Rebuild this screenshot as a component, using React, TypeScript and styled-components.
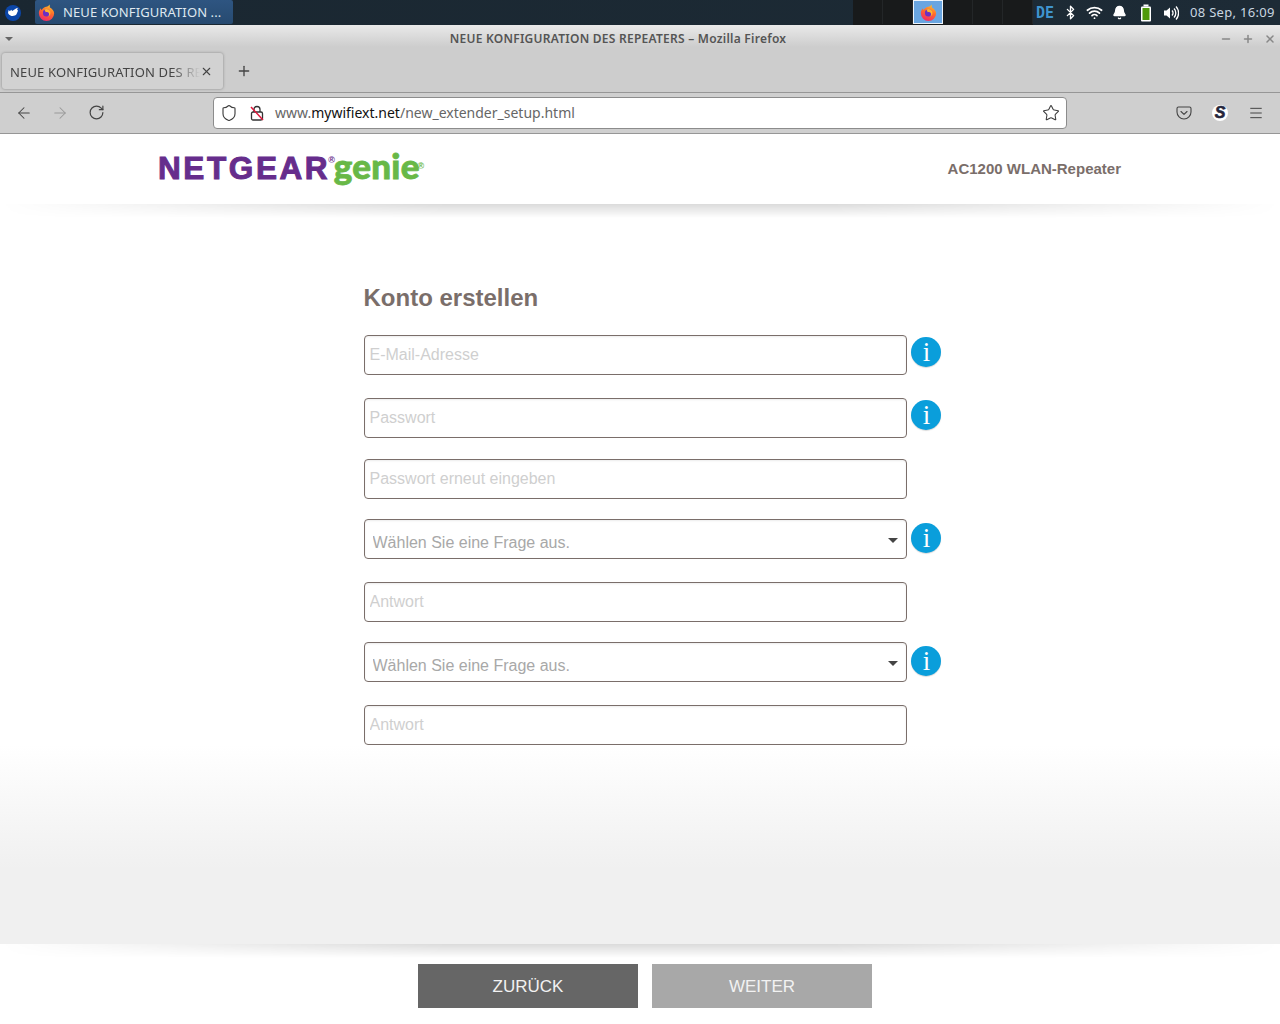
import React from "react";
import styled, { createGlobalStyle } from "styled-components";
import { ArrowLeft, ArrowRight, RotateCw, Star, Shield, Plus, X, Minus, Menu, Bluetooth, Wifi, Bell } from "lucide-react";

const GlobalStyle = createGlobalStyle`
  html, body {
    margin: 0;
    padding: 0;
    background: #fff;
  }
  * {
    box-sizing: border-box;
  }
`;

const Screen = styled.div`
  width: 1280px;
  height: 1024px;
  overflow: hidden;
  display: flex;
  flex-direction: column;
  font-family: "Noto Sans", sans-serif;
`;

const Taskbar = styled.div`
  height: 25px;
  flex: none;
  display: flex;
  align-items: stretch;
  background: linear-gradient(90deg, #1a2731, #1d2b36);
  color: #d7e3ec;
`;

const StartButton = styled.div`
  width: 35px;
  display: flex;
  align-items: center;
  padding-left: 5px;
`;

const WindowButton = styled.div`
  width: 198px;
  height: 24px;
  display: flex;
  align-items: center;
  gap: 8px;
  padding-left: 3px;
  border-radius: 2px;
  background: linear-gradient(180deg, #2e5581, #274a70);
  font-size: 13px;
  letter-spacing: 0.1px;
  color: #dfe8f0;
  white-space: nowrap;
`;

const TaskSpacer = styled.div`
  flex: 1;
`;

const Pager = styled.div`
  width: 180px;
  display: flex;
  background: #181a1b;
`;

const PagerCell = styled.div<{ $active?: boolean }>`
  width: 30px;
  height: 24px;
  display: flex;
  align-items: center;
  justify-content: center;
  border-right: 1px solid #232628;
  ${(p) => p.$active && "background: #69a5e0; border: 1px solid #eef4fa;"}
`;

const Tray = styled.div`
  width: 247px;
  display: flex;
  align-items: center;
  padding-left: 3px;
  color: #fff;
`;

const TrayLang = styled.span`
  width: 21px;
  font-family: "DejaVu Sans Mono", monospace;
  font-weight: bold;
  font-size: 15px;
  color: #3f94cf;
`;

const TraySlot = styled.span<{ $w: number }>`
  width: ${(p) => p.$w}px;
  display: flex;
  justify-content: center;
`;

const Clock = styled.span`
  margin-left: 7px;
  margin-top: -1px;
  font-size: 13px;
  letter-spacing: 0.3px;
  color: #c9d6e0;
  white-space: nowrap;
`;

const WindowFrame = styled.div`
  height: 68px;
  flex: none;
  background: linear-gradient(180deg, #e9e9e9 0, #cdcdcd 22px);
  border-bottom: 1px solid #969696;
  display: flex;
  flex-direction: column;
`;

const TitleRow = styled.div`
  height: 27px;
  display: flex;
  align-items: center;
  padding: 0 5px;
`;

const TitleArrow = styled.span`
  width: 0;
  height: 0;
  border-left: 4px solid transparent;
  border-right: 4px solid transparent;
  border-top: 4px solid #666;
`;

const TitleText = styled.div`
  flex: 1;
  padding-left: 3px;
  text-align: center;
  font-size: 12px;
  font-weight: 600;
  letter-spacing: 0.25px;
  color: #555;
`;

const TitleControls = styled.div`
  width: 56px;
  display: flex;
  justify-content: space-between;
  margin-right: -1px;
  color: #888;
`;

const TabRow = styled.div`
  display: flex;
  align-items: center;
  padding-left: 2px;
`;

const Tab = styled.div`
  width: 221px;
  height: 36px;
  margin-top: 1px;
  display: flex;
  align-items: center;
  padding-left: 8px;
  border-radius: 3px;
  background: #d2d2d2;
  box-shadow: 0 0 3px rgba(0, 0, 0, 0.35);
  color: #444;
`;

const TabLabel = styled.span`
  width: 190px;
  padding-top: 1px;
  overflow: hidden;
  white-space: nowrap;
  font-size: 13px;
  letter-spacing: 0.15px;
  mask-image: linear-gradient(90deg, #000 85%, transparent);
`;

const NewTab = styled.div`
  margin-left: 13px;
  display: flex;
  color: #444;
`;

const Toolbar = styled.div`
  height: 41px;
  flex: none;
  display: flex;
  align-items: center;
  background: #cfcfcf;
  border-bottom: 1px solid #969696;
`;

const NavButton = styled.div<{ $muted?: boolean }>`
  width: 36px;
  display: flex;
  justify-content: center;
  color: ${(p) => (p.$muted ? "#999" : "#444")};
`;

const NavGroup = styled.div`
  width: 213px;
  display: flex;
  padding-left: 6px;
`;

const UrlBar = styled.div`
  width: 854px;
  height: 32px;
  margin-top: -1px;
  display: flex;
  align-items: center;
  padding: 0 6px;
  background: #fff;
  border: 1px solid #8c8c8c;
  border-radius: 4px;
  color: #3c3c3c;
`;

const UrlIcon = styled.span`
  width: 30px;
  display: flex;
`;

const UrlText = styled.div`
  flex: 1;
  margin-left: 11px;
  font-size: 14px;
  color: #666;
`;

const UrlHost = styled.span`
  color: #111;
`;

const ToolIcons = styled.div`
  flex: 1;
  display: flex;
  justify-content: flex-end;
  align-items: center;
  gap: 20px;
  padding-right: 16px;
  color: #444;
`;

const Page = styled.div`
  flex: 1;
  display: flex;
  flex-direction: column;
  font-family: "Liberation Sans", Arial, sans-serif;
  background: #fff;
`;

const Header = styled.div`
  height: 70px;
  flex: none;
  display: flex;
  align-items: center;
  justify-content: space-between;
  padding: 0 159px 2px 158px;
`;

const Logo = styled.div`
  display: flex;
  align-items: baseline;
  margin-top: -6px;
  white-space: nowrap;
`;

const LogoBrand = styled.span`
  font-family: "Liberation Sans", sans-serif;
  font-weight: bold;
  font-size: 31.5px;
  letter-spacing: 2.6px;
  color: #662d8c;
  -webkit-text-stroke: 1px #662d8c;
`;

const LogoProduct = styled.span`
  margin-left: -1px;
  font-family: "Lato", sans-serif;
  font-weight: 900;
  font-size: 35px;
  letter-spacing: 0.2px;
  color: #68b847;
  -webkit-text-stroke: 0.8px #68b847;
`;

const LogoMark = styled.sup<{ $color: string; $top: number }>`
  font-family: "Liberation Sans", sans-serif;
  font-size: 9px;
  font-weight: bold;
  letter-spacing: 0;
  -webkit-text-stroke: 0;
  line-height: 0;
  position: relative;
  top: ${(p) => p.$top}px;
  margin-left: -2px;
  color: ${(p) => p.$color};
`;

const ModelName = styled.div`
  font-size: 15px;
  font-weight: bold;
  color: #7a6e6a;
`;

const Content = styled.div`
  flex: 1;
  position: relative;
  padding: 79px 0 0 364px;
  background: linear-gradient(180deg, #fff 0, #fff 541px, #f0f0f0 665px);

  &::before,
  &::after {
    content: "";
    position: absolute;
    left: 0;
    right: 0;
    height: 14px;
    background: linear-gradient(180deg, rgba(0, 0, 0, 0.14), transparent);
    mask-image: linear-gradient(90deg, transparent, #000 35%, #000 65%, transparent);
  }
  &::before {
    top: 0;
  }
  &::after {
    top: 100%;
  }
`;

const Heading = styled.h1`
  margin: 0 0 22px -0.5px;
  height: 30px;
  font-size: 24px;
  line-height: 30px;
  font-weight: bold;
  color: #7a6e6a;
`;

const Row = styled.div<{ $gap: number }>`
  display: flex;
  gap: 4px;
  margin-bottom: ${(p) => p.$gap}px;
`;

const TextField = styled.input`
  width: 543px;
  height: 40px;
  padding: 0 4.5px;
  background: #fff;
  border: 1px solid #7a6e6a;
  border-radius: 4px;
  outline: none;
  font-family: "Liberation Sans", Arial, sans-serif;
  font-size: 16px;
  box-shadow: inset 0 1px 2px rgba(0, 0, 0, 0.08);

  &::placeholder {
    color: #cfcfcf;
    opacity: 1;
  }
`;

const SelectBox = styled.div`
  position: relative;
  width: 543px;
  height: 40px;

  &::after {
    content: "";
    position: absolute;
    right: 9px;
    top: 19px;
    border-left: 5px solid transparent;
    border-right: 5px solid transparent;
    border-top: 5px solid #444;
  }
`;

const SelectField = styled.select`
  width: 100%;
  height: 100%;
  padding: 7px 0 0 7.5px;
  appearance: none;
  background: #fff;
  border: 1px solid #7a6e6a;
  border-radius: 4px;
  outline: none;
  font-family: "Liberation Sans", Arial, sans-serif;
  font-size: 16px;
  color: #a8a8a8;
  box-shadow: inset 0 1px 2px rgba(0, 0, 0, 0.08);
`;

const InfoBadge = styled.div<{ $low?: boolean }>`
  width: 30px;
  height: 30px;
  margin-top: ${(p) => (p.$low ? 4 : 2)}px;
  padding-left: 1px;
  border-radius: 50%;
  background: #0a9edb;
  box-shadow: 0 1px 1px rgba(0, 0, 0, 0.15);
  color: #fff;
  display: flex;
  align-items: center;
  justify-content: center;
  font-family: "Liberation Serif", serif;
  font-size: 27px;
  line-height: 30px;
`;

const Footer = styled.div`
  height: 80px;
  flex: none;
  display: flex;
  justify-content: center;
  gap: 14px;
  padding: 20px 0 0 10px;
`;

const FooterButton = styled.button<{ $disabled?: boolean }>`
  width: 220px;
  height: 44px;
  padding: 2px 0 0;
  border: 0;
  background: ${(p) => (p.$disabled ? "#a8a8a8" : "#666")};
  color: #f2f2f2;
  font-family: "Liberation Sans", Arial, sans-serif;
  font-size: 17px;
`;

const AccountBadge = styled.span`
  width: 16px;
  height: 16px;
  border-radius: 50%;
  background: #fff;
  display: flex;
  align-items: center;
  justify-content: center;
  font-family: "Liberation Sans", sans-serif;
  font-weight: bold;
  font-style: italic;
  font-size: 16px;
  color: #26263c;
  -webkit-text-stroke: 0.6px #26263c;
`;

// flame swirl, ids differ per use so the gradients don't clash
const FirefoxIcon: React.FC<{ size: number; id: string }> = ({ size, id }) => (
  <svg width={size} height={size} viewBox="0 0 20 20">
    <defs>
      <linearGradient id={id} x1="0.7" y1="0" x2="0.3" y2="1">
        <stop offset="0" stopColor="#ffc22e" />
        <stop offset="0.45" stopColor="#ff6a2b" />
        <stop offset="1" stopColor="#f0286c" />
      </linearGradient>
    </defs>
    <path d="M13.500 .5c.8 2 .2 3 .5 3.600C16.500 5.500 19 8 19 11a9 9 0 0 1-18 0c0-2.500 1-4.700 2.300-6 0 1 .3 1.800.9 2.200C5.500 5 8 3.500 9.700 3.300 11.300 3 13 2 13.500 .5z" fill={`url(#${id})`} />
    <circle cx="10" cy="10.500" r="4.200" fill="#6b2fc4" />
    <path d="M7.500 6.500C10 5 13.500 6 14.500 9c.8 2.500-.5 5-2.800 5.800 1.300-1 1.800-2.800 1-4.200-.7-1.200-2.400-1.600-3.600-.9L7.500 6.500z" fill="#ffb52e" />
  </svg>
);

const DesktopIcon: React.FC = () => (
  <svg width="16" height="16" viewBox="0 0 16 16">
    <circle cx="8" cy="8" r="8" fill="#0b46a8" />
    <path d="M3 8l.6-3 1.300 1.300 1.300-1.500 1 1.300L11 3.500l1.800-.8-.7 2.300 1 .5-1.600 3.800C10.500 11 7 11.500 5.500 10.500 4.300 10 3.500 9 3 8z" fill="#fff" />
  </svg>
);

const BatteryIcon: React.FC = () => (
  <svg width="12" height="18" viewBox="0 0 12 18">
    <rect x="3.500" y="0.500" width="5" height="2" fill="#fff" />
    <rect x="1" y="2.500" width="10" height="15" rx="1" fill="#fff" />
    <rect x="2.500" y="4" width="7" height="12" fill="#4f9a0a" />
  </svg>
);

const VolumeIcon: React.FC = () => (
  <svg width="16" height="16" viewBox="0 0 16 16" fill="none" stroke="#fff">
    <path d="M1 5.500h2.500L7 2.500v11l-3.500-3H1z" fill="#fff" stroke="none" />
    <path d="M9 5.500a3.500 3.500 0 0 1 0 5" strokeWidth="1.300" />
    <path d="M11 3.500a6.500 6.500 0 0 1 0 9" strokeWidth="1.300" />
    <path d="M13 1.500a9.500 9.500 0 0 1 0 13" strokeWidth="1.300" />
  </svg>
);

const PocketIcon: React.FC = () => (
  <svg width="16" height="16" viewBox="0 0 16 16" fill="none" stroke="currentColor" strokeWidth="1.100">
    <path d="M2.500 2h11A1.500 1.500 0 0 1 15 3.500V7a7 7 0 0 1-14 0V3.500A1.500 1.500 0 0 1 2.500 2z" />
    <path d="M5 6.500l3 2.800 3-2.800" strokeLinecap="round" strokeLinejoin="round" />
  </svg>
);

const LockIcon: React.FC = () => (
  <svg width="14" height="16" viewBox="0 0 14 16" fill="none">
    <path d="M4 7V4.500a3 3 0 0 1 6 0V7" stroke="#333" strokeWidth="1.300" />
    <rect x="1.500" y="7" width="11" height="8" rx="1.500" stroke="#333" strokeWidth="1.300" />
    <path d="M1 2l12 13" stroke="#e0183c" strokeWidth="1.500" />
  </svg>
);

const fields = [
  { kind: "input", label: "E-Mail-Adresse", info: true, gap: 23 },
  { kind: "input", label: "Passwort", info: true, gap: 21 },
  { kind: "input", label: "Passwort erneut eingeben", info: false, gap: 20 },
  { kind: "select", label: "Wählen Sie eine Frage aus.", info: true, gap: 23 },
  { kind: "input", label: "Antwort", info: false, gap: 20 },
  { kind: "select", label: "Wählen Sie eine Frage aus.", info: true, gap: 23 },
  { kind: "input", label: "Antwort", info: false, gap: 0 },
];

const App: React.FC = () => {
  return (
    <Screen>
      <GlobalStyle />
      <Taskbar>
        <StartButton>
          <DesktopIcon />
        </StartButton>
        <WindowButton>
          <FirefoxIcon size={17} id="ff-task" />
          NEUE KONFIGURATION ...
        </WindowButton>
        <TaskSpacer />
        <Pager>
          <PagerCell />
          <PagerCell />
          <PagerCell $active>
            <FirefoxIcon size={17} id="ff-pager" />
          </PagerCell>
          <PagerCell />
          <PagerCell />
          <PagerCell />
        </Pager>
        <Tray>
          <TrayLang>DE</TrayLang>
          <TraySlot $w={26}>
            <Bluetooth size={15} strokeWidth={2.200} />
          </TraySlot>
          <TraySlot $w={22}>
            <Wifi size={17} strokeWidth={2.500} />
          </TraySlot>
          <TraySlot $w={28}>
            <Bell size={15} fill="#fff" />
          </TraySlot>
          <TraySlot $w={26}>
            <BatteryIcon />
          </TraySlot>
          <TraySlot $w={24}>
            <VolumeIcon />
          </TraySlot>
          <Clock>08 Sep, 16:09</Clock>
        </Tray>
      </Taskbar>

      <WindowFrame>
        <TitleRow>
          <TitleArrow />
          <TitleText>NEUE KONFIGURATION DES REPEATERS – Mozilla Firefox</TitleText>
          <TitleControls>
            <Minus size={12} strokeWidth={3} />
            <Plus size={12} strokeWidth={3} />
            <X size={12} strokeWidth={3} />
          </TitleControls>
        </TitleRow>
        <TabRow>
          <Tab>
            <TabLabel>NEUE KONFIGURATION DES REPEATERS</TabLabel>
            <X size={13} />
          </Tab>
          <NewTab>
            <Plus size={16} />
          </NewTab>
        </TabRow>
      </WindowFrame>

      <Toolbar>
        <NavGroup>
          <NavButton>
            <ArrowLeft size={18} strokeWidth={1.400} />
          </NavButton>
          <NavButton $muted>
            <ArrowRight size={18} strokeWidth={1.400} />
          </NavButton>
          <NavButton>
            <RotateCw size={17} strokeWidth={1.700} />
          </NavButton>
        </NavGroup>
        <UrlBar>
          <UrlIcon>
            <Shield size={18} strokeWidth={1.500} />
          </UrlIcon>
          <LockIcon />
          <UrlText>
            www.<UrlHost>mywifiext.net</UrlHost>/new_extender_setup.html
          </UrlText>
          <Star size={18} strokeWidth={1.400} />
        </UrlBar>
        <ToolIcons>
          <PocketIcon />
          <AccountBadge>S</AccountBadge>
          <Menu size={16} strokeWidth={1.500} />
        </ToolIcons>
      </Toolbar>

      <Page>
        <Header>
          <Logo>
            <LogoBrand>
              NETGEAR<LogoMark $color="#662d8c" $top={-4}>®</LogoMark>
            </LogoBrand>
            <LogoProduct>
              genie<LogoMark $color="#68b847" $top={3}>®</LogoMark>
            </LogoProduct>
          </Logo>
          <ModelName>AC1200 WLAN-Repeater</ModelName>
        </Header>

        <Content>
          <Heading>Konto erstellen</Heading>
          {fields.map((field, i) => (
            <Row key={i} $gap={field.gap}>
              {field.kind === "input" ? (
                <TextField placeholder={field.label} readOnly />
              ) : (
                <SelectBox>
                  <SelectField defaultValue={field.label}>
                    <option>{field.label}</option>
                  </SelectField>
                </SelectBox>
              )}
              {field.info && <InfoBadge $low={field.kind === "select"}>i</InfoBadge>}
            </Row>
          ))}
        </Content>

        <Footer>
          <FooterButton>ZURÜCK</FooterButton>
          <FooterButton $disabled>WEITER</FooterButton>
        </Footer>
      </Page>
    </Screen>
  );
};

export default App;
